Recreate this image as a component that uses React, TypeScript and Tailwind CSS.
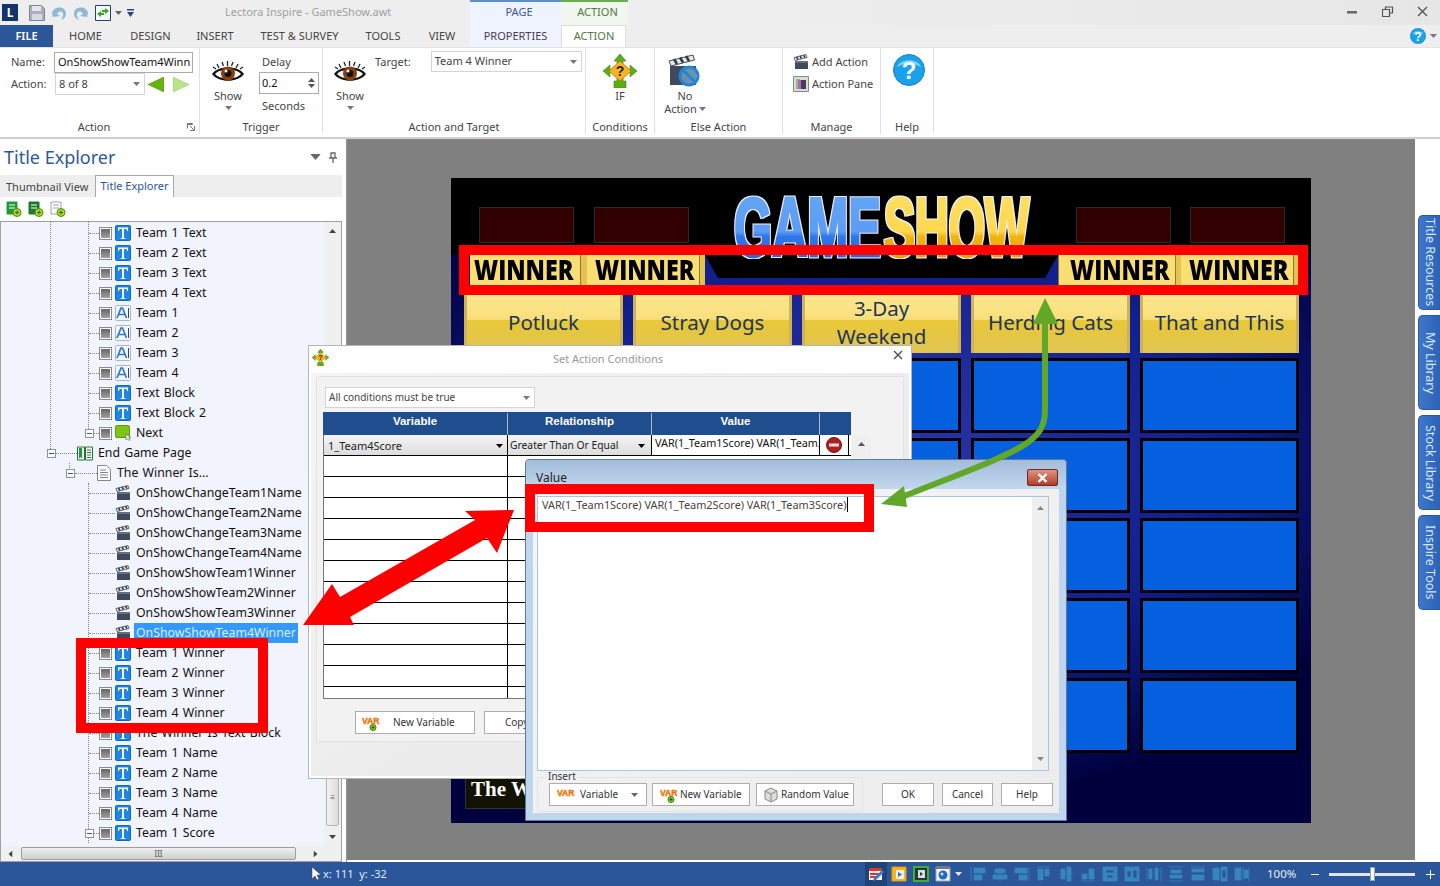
const Caret = ({ className = "" }: { className?: string }) => (
  <svg width="7" height="4" viewBox="0 0 7 4" className={className}>
    <path d="M0 0h7L3.500 4z" fill="currentColor" />
  </svg>
);

const Eye = () => (
  <svg width="34" height="24" viewBox="0 0 34 24">
    <path d="M2 7 5 9M6 4l2 4M11 2l1.500 4M16.500 1v5M22 2l-1.500 4M27 4l-2 4M32 7l-3 2" stroke="#222" strokeWidth="1.300" />
    <path d="M1 14C7 5 27 5 33 14 27 23 7 23 1 14z" fill="#111" />
    <path d="M4 14C9 8 25 8 30 14 25 20 9 20 4 14z" fill="#fff" />
    <circle cx="17" cy="13.500" r="7" fill="#8a3f10" />
    <circle cx="17" cy="13.500" r="3.500" fill="#111" />
    <circle cx="15" cy="11" r="1.500" fill="#fff" />
  </svg>
);

const Clapper = ({ size = 16 }: { size?: number }) => (
  <svg width={size} height={size} viewBox="0 0 16 16">
    <path d="M2 7h13v8H2z" fill="#3f4b5c" />
    <path d="M1 3.500 13 .5l1 3L2 6.500z" fill="#e8e8e8" stroke="#3f4b5c" strokeWidth=".8" />
    <path d="M3.500 3l1.500 2.500M7 2l1.500 2.500M10.500 1.200 12 3.700" stroke="#2f3845" strokeWidth="1.500" />
    <path d="M2 7h13v2H2z" fill="#66717f" />
  </svg>
);

const TIcon = () => (
  <svg width="16" height="16" viewBox="0 0 16 16">
    <rect x=".5" y=".5" width="15" height="15" rx="1" fill="#1c86e8" stroke="#1468b8" />
    <path d="M3 2.500h10V6h-1l-.5-2H9v9l1.500.5v.5h-5v-.5L7 13V4H4.500L4 6H3z" fill="#fff" />
  </svg>
);

const AIcon = () => (
  <svg width="16" height="16" viewBox="0 0 16 16">
    <rect x=".5" y=".5" width="15" height="15" rx="1" fill="#f4f6fd" stroke="#a8b4c4" />
    <path d="M2 13 6 3h1.500l4 10M3.800 9.500h6" fill="none" stroke="#2b78d0" strokeWidth="1.700" />
    <path d="M13.500 3v10" stroke="#444" strokeWidth="1" />
  </svg>
);

const GrayBox = () => (
  <span className="flex h-[13px] w-[13px] shrink-0 items-center justify-center border border-[#8a8a8a] bg-white">
    <span className="h-[9px] w-[9px] bg-gradient-to-b from-[#666] to-[#a0a0a0]" />
  </span>
);

const Toggle = ({ plus }: { plus?: boolean }) => (
  <svg width="9" height="9" viewBox="0 0 9 9" className="shrink-0">
    <rect x=".5" y=".5" width="8" height="8" fill="#fff" stroke="#8a93a5" />
    <path d={plus ? "M2 4.500h5M4.500 2v5" : "M2 4.500h5"} stroke="#2b579a" />
  </svg>
);

const Dots = ({ w }: { w: number }) => (
  <span className="h-0 shrink-0 border-t border-dotted border-[#808080]" style={{ width: w }} />
);

const Book = () => (
  <svg width="16" height="15" viewBox="0 0 16 15" className="shrink-0">
    <path d="M.5 1h7v13h-7zM8.500 1h7v13h-7z" fill="#fff" stroke="#1c7a2e" />
    <path d="M2 2h3v11l-1.500-2L2 13z" fill="#1f9a3a" />
    <path d="M10 4h4M10 6.500h4M10 9h4M10 11.500h4" stroke="#1c7a2e" />
  </svg>
);

const PageIcon = () => (
  <svg width="14" height="16" viewBox="0 0 14 16" className="shrink-0">
    <path d="M.5.5h9l4 4v11H.5z" fill="#fff" stroke="#7d8794" />
    <path d="M3 5h6M3 7.500h8M3 10h8M3 12.500h8" stroke="#7d8794" />
  </svg>
);

const NextIcon = () => (
  <svg width="16" height="16" viewBox="0 0 16 16" className="shrink-0">
    <rect x=".5" y=".5" width="14" height="12" rx="1.500" fill="#7ec614" stroke="#5c9a10" />
    <path d="M11 9l0 6 1.500-1.500 1.500 2 1-.7-1.300-2H16z" fill="#fff" stroke="#555" strokeWidth=".6" />
  </svg>
);

type Row = { kind: "t" | "a" | "clap" | "next" | "book" | "page"; label: string; selected?: boolean };

const rows: Row[] = [
  { kind: "t", label: "Team 1 Text" },
  { kind: "t", label: "Team 2 Text" },
  { kind: "t", label: "Team 3 Text" },
  { kind: "t", label: "Team 4 Text" },
  { kind: "a", label: "Team 1" },
  { kind: "a", label: "Team 2" },
  { kind: "a", label: "Team 3" },
  { kind: "a", label: "Team 4" },
  { kind: "t", label: "Text Block" },
  { kind: "t", label: "Text Block 2" },
  { kind: "next", label: "Next" },
  { kind: "book", label: "End Game Page" },
  { kind: "page", label: "The Winner Is..." },
  { kind: "clap", label: "OnShowChangeTeam1Name" },
  { kind: "clap", label: "OnShowChangeTeam2Name" },
  { kind: "clap", label: "OnShowChangeTeam3Name" },
  { kind: "clap", label: "OnShowChangeTeam4Name" },
  { kind: "clap", label: "OnShowShowTeam1Winner" },
  { kind: "clap", label: "OnShowShowTeam2Winner" },
  { kind: "clap", label: "OnShowShowTeam3Winner" },
  { kind: "clap", label: "OnShowShowTeam4Winner", selected: true },
  { kind: "t", label: "Team 1 Winner" },
  { kind: "t", label: "Team 2 Winner" },
  { kind: "t", label: "Team 3 Winner" },
  { kind: "t", label: "Team 4 Winner" },
  { kind: "t", label: "The Winner Is Text Block" },
  { kind: "t", label: "Team 1 Name" },
  { kind: "t", label: "Team 2 Name" },
  { kind: "t", label: "Team 3 Name" },
  { kind: "t", label: "Team 4 Name" },
  { kind: "t", label: "Team 1 Score" },
];

const TreeRow = ({ row, index }: { row: Row; index: number }) => {
  const text = <span className="ml-[5px] whitespace-nowrap">{row.label}</span>;
  if (row.kind === "book")
    return (
      <div className="flex h-5 items-center pl-[46px]">
        <Toggle />
        <Dots w={21} />
        <Book />
        <span className="ml-[5px] whitespace-nowrap">{row.label}</span>
      </div>
    );
  if (row.kind === "page")
    return (
      <div className="flex h-5 items-center pl-[65px]">
        <Toggle />
        <Dots w={22} />
        <PageIcon />
        <span className="ml-[6px] whitespace-nowrap">{row.label}</span>
      </div>
    );
  if (row.kind === "clap")
    return (
      <div className="flex h-5 items-center pl-[88px]">
        <Dots w={26} />
        <Clapper />
        <span className={`ml-[3px] whitespace-nowrap px-[2px] py-px ${row.selected ? "bg-[#3399ff] text-[#dbeeff]" : ""}`}>{row.label}</span>
      </div>
    );
  return (
    <div className={`flex h-5 items-center ${row.kind === "next" || index === 30 ? "pl-[84px]" : "pl-[88px]"}`}>
      {row.kind === "next" || index === 30 ? <Toggle /> : null}
      <Dots w={row.kind === "next" || index === 30 ? 5 : 10} />
      <GrayBox />
      <span className="ml-[3px] shrink-0">{row.kind === "a" ? <AIcon /> : row.kind === "next" ? <NextIcon /> : <TIcon />}</span>
      {text}
    </div>
  );
};

const VarIcon = ({ plus }: { plus?: boolean }) => (
  <svg width="18" height="16" viewBox="0 0 18 16" className="shrink-0">
    <text x="0" y="9" fontSize="8.500" fontWeight="700" fontFamily="Liberation Sans" fill="#ec5f10" stroke="#ef8a14" strokeWidth=".5">
      VAR
    </text>
    {plus ? (
      <>
        <circle cx="11" cy="12.500" r="3" fill="#8ed020" stroke="#3a7a10" />
        <path d="M9.500 12.500h3M11 11v3" stroke="#245a08" />
      </>
    ) : null}
  </svg>
);

const IfIcon = ({ size = 34 }: { size?: number }) => (
  <svg width={size} height={size} viewBox="0 0 34 34">
    <path d="M17 0l6 7h-3v20h3v7H11v-7h3V7h-3zM0 17l7-6v12zM34 17l-7-6v12z" fill="#5cae14" stroke="#3f7f0c" strokeWidth=".6" />
    <path d="M17 7l11 10-11 10L6 17z" fill="#fbb324" stroke="#c97f00" />
    <text x="17" y="22" textAnchor="middle" fontSize="14" fontWeight="700" fontFamily="Liberation Sans" fill="#222">?</text>
  </svg>
);

const HelpCircle = ({ size = 32 }: { size?: number }) => (
  <svg width={size} height={size} viewBox="0 0 32 32">
    <circle cx="16" cy="16" r="15.500" fill="#19a2ec" stroke="#1680c8" />
    <path d="M4 13C7 4 25 4 28 13 22 9 10 9 4 13z" fill="#7fd3fa" />
    <text x="16" y="25" textAnchor="middle" fontSize="24" fontWeight="700" fontFamily="Liberation Sans" fill="#fff">?</text>
  </svg>
);

const RibbonGroup = ({ w, label, children, labelClass = "" }: { w: number; label: string; children: React.ReactNode; labelClass?: string }) => (
  <div className="relative flex h-[86px] shrink-0 flex-col border-r border-[#e1e1e1]" style={{ width: w }}>
    <div className="flex min-h-0 flex-1">{children}</div>
    <div className={`h-[14px] text-center text-[11px] leading-[14px] text-[#444] ${labelClass}`}>{label}</div>
  </div>
);

const Select = ({ className, value, textClass = "text-[11px]" }: { className: string; value: string; textClass?: string }) => (
  <div className={`flex items-center justify-between border border-[#d4d4d4] bg-white px-[3px] text-[#444] ${className}`}>
    <span className={`whitespace-nowrap ${textClass}`}>{value}</span>
    <Caret className="mr-[1px] text-[#777]" />
  </div>
);

const AlignIcon = ({ kind }: { kind: number }) => {
  const shapes: string[] = [
    "M1 1v14M4 2h11v5H4zM4 9h8v5H4z",
    "M8 1v14M3 3h10v4H3zM1 9h14v4H1z",
    "M15 1v14M1 2h12v5H1zM5 9h8v5H5z",
    "M1 1h14M2 3h5v11H2zM9 3h4v7H9z",
    "M1 8h14M3 3h4v10H3zM9 1h4v14H9z",
    "M1 15h14M2 8h5v5H2zM9 3h5v10H9z",
    "M1 1h14v14H1zM4 4h8v3H4zM5 9h6v3H5z",
    "M1 1h14v14H1zM3 5h4v6H3zM9 4h4v8H9z",
    "M1 1v14M15 1v14M3 3h3v10H3zM9 2h3v12H9z",
    "M1 1h14M1 15h14M3 4h10v3H3zM2 9h12v3H2z",
    "M1 1h14M2 3h12v3H2zM2 9h12v5H2z",
    "M1 2h6v12H1zM9 1v14h6V1zM10 4h4v8h-4z",
    "M1 2h6v12H1zM9 1v14M15 1v14M10 4h4v8h-4z",
  ];
  return (
    <svg width="16" height="16" viewBox="0 0 16 16" className="shrink-0">
      <path d={shapes[kind]} fill="#3586bd" stroke="#3a84bb" strokeWidth=".8" fillRule="evenodd" />
    </svg>
  );
};

const DialogButton = ({ className = "", children }: { className?: string; children: React.ReactNode }) => (
  <div className={`flex h-[23px] shrink-0 items-center border border-[#adadad] bg-white text-[10px] text-[#333] ${className}`}>{children}</div>
);

const ConditionsDialog = () => (
  <div className="absolute left-[308px] top-[345px] z-10 flex h-[434px] w-[604px] flex-col border border-[#b5b5b5] bg-white">
    <div className="relative flex h-[27px] shrink-0 items-center justify-center pr-[4px] text-[11px] text-[#999]">
      <span className="absolute left-[3px] top-[3px]"><IfIcon size={17} /></span>
      <span>Set Action Conditions</span>
      <span className="absolute right-[8px] top-[4px] text-[#444]">
        <svg width="10" height="10" viewBox="0 0 10 10"><path d="M1 1l8 8M9 1l-8 8" stroke="currentColor" strokeWidth="1.200" /></svg>
      </span>
    </div>
    <div className="mx-[2px] mb-[2px] flex-1 bg-gradient-to-br from-[#f4f4f4] to-[#e6e6e6] px-[5px] pt-[3px]">
      <div className="h-[366px] rounded-[3px] border border-[#e2e2e2] bg-[#f2f2f2] pl-[9px] pt-[10px]">
        <Select className="-ml-[1px] h-[21px] w-[210px]" textClass="text-[10px]" value="All conditions must be true" />
        <div className="relative -ml-[3px] mt-[4px] w-[528px]">
          <div className="flex h-[23px] border-t border-[#1f4e8f] bg-[#1f4e8f] text-center font-['Liberation_Sans',sans-serif] text-[11.500px] font-bold text-white">
            <div className="w-[185px] border-r border-[#a9bcd4] leading-[16px]">Variable</div>
            <div className="w-[144px] border-r border-[#a9bcd4] leading-[16px]">Relationship</div>
            <div className="w-[168px] border-r border-[#a9bcd4] leading-[16px]">Value</div>
            <div className="flex-1" />
          </div>
          <div className="border-b border-l border-[#777] bg-white">
            <div className="flex h-[21px] border-b border-black text-[11px] text-[#222]">
              <div className="flex w-[184px] items-center justify-between border-r border-black bg-gradient-to-b from-[#f5f5f5] to-[#dcdcdc] px-[4px] pt-[2px]">
                <span>1_Team4Score</span>
                <Caret className="text-black" />
              </div>
              <div className="flex w-[144px] items-center justify-between border-r border-black bg-gradient-to-b from-[#f5f5f5] to-[#dcdcdc] px-[2px] pr-[6px] pt-[2px] text-[10.300px]">
                <span className="whitespace-nowrap">Greater Than Or Equal</span>
                <Caret className="text-black" />
              </div>
              <div className="w-[168px] overflow-hidden whitespace-nowrap border-r border-black pl-[3px] text-[10.800px] text-[#111]">VAR(1_Team1Score) VAR(1_Team2Score)</div>
              <div className="flex w-[29px] items-center justify-center border-r border-black">
                <svg width="16" height="16" viewBox="0 0 16 16">
                  <circle cx="8" cy="8" r="7.500" fill="#b51c1c" stroke="#7a0f0f" />
                  <rect x="3" y="6.500" width="10" height="3" fill="#f3e4e4" />
                </svg>
              </div>
            </div>
            {Array.from({ length: 11 }).map((_, i) => (
              <div key={i} className="h-[21px] border-b border-black">
                <div className="h-full w-[184px] border-r border-black" />
              </div>
            ))}
            <div className="h-[11px] w-[184px] border-r border-black" />
          </div>
          <div className="absolute left-[529px] top-[23px] flex h-[22px] w-[19px] justify-center bg-[#efefef] pt-[7px] text-[#555]">
            <Caret className="rotate-180" />
          </div>
        </div>
        <div className="mt-[12px] flex gap-[9px] pl-[29px]">
          <DialogButton className="w-[120px] pl-[6px]">
            <VarIcon plus />
            <span className="ml-[13px]">New Variable</span>
          </DialogButton>
          <DialogButton className="w-[120px] pl-[20px]">Copy</DialogButton>
        </div>
      </div>
    </div>
  </div>
);

const ValueDialog = () => (
  <div className="absolute left-[525px] top-[459px] z-20 flex h-[362px] w-[542px] flex-col rounded-t-[4px] border border-[#5a7a98] bg-[#bed5ed] px-[7px] pb-[7px]">
    <div className="relative flex h-[29px] shrink-0 items-center pl-[3px] pt-[6px] text-[12px] text-[#222]">
      <div className="absolute inset-x-[-7px] top-0 h-[29px] rounded-t-[4px] bg-gradient-to-b from-[#a3bcd9] to-[#c1d7ee]" />
      <span className="relative">Value</span>
      <span className="absolute right-[1px] top-[9px] flex h-[17px] w-[31px] items-center justify-center rounded-[2px] border border-[#6b2a22] bg-gradient-to-b from-[#dc9181] via-[#c96a58] to-[#b23a28]">
        <svg width="11" height="10" viewBox="0 0 11 10"><path d="M1.500 1l8 8M9.500 1l-8 8" stroke="#fff" strokeWidth="2.400" /></svg>
      </span>
    </div>
    <div className="flex flex-1 flex-col bg-gradient-to-br from-[#f5f5f5] to-[#ececec] px-[4px] pt-[7px]">
      <div className="relative h-[275px] w-[512px] border border-[#a8c6e0] bg-white">
        <div className="pl-[4px] text-[10.900px] leading-[16px] text-[#444]">
          <span>VAR(1_Team1Score) VAR(1_Team2Score) VAR(1_Team3Score)</span>
          <span className="ml-[1px] border-r border-black" />
        </div>
        <div className="absolute bottom-0 right-0 top-0 flex w-[16px] flex-col items-center justify-between bg-[#efefef] py-[9px] text-[#888]">
          <Caret className="rotate-180" />
          <Caret />
        </div>
      </div>
      <div className="flex items-end">
        <div className="relative mt-[6px] flex h-[35px] w-[326px] items-end rounded-[3px] border border-[#e4e4e4] pb-[5px] pl-[11px] pr-[4px]">
          <span className="absolute -top-[7px] left-[9px] bg-[#f1f1f1] px-[1px] text-[10px] leading-[11px] text-[#333]">Insert</span>
          <div className="flex gap-[5px]">
            <DialogButton className="w-[98px] pl-[7px]">
              <VarIcon />
              <span className="ml-[5px]">Variable</span>
              <Caret className="ml-[13px] text-[#666]" />
            </DialogButton>
            <DialogButton className="w-[98px] pl-[7px]">
              <VarIcon plus />
              <span className="ml-[2px] whitespace-nowrap">New Variable</span>
            </DialogButton>
            <DialogButton className="ml-[1px] w-[98px] pl-[6px]">
              <svg width="16" height="16" viewBox="0 0 16 16" className="shrink-0">
                <path d="M8 1l6 3v8l-6 3-6-3V4z" fill="#ddd" stroke="#888" />
                <path d="M2 4l6 3 6-3M8 7v8" fill="none" stroke="#888" />
              </svg>
              <span className="ml-[2px] whitespace-nowrap">Random Value</span>
            </DialogButton>
          </div>
        </div>
        <div className="mb-[6px] ml-[19px] flex gap-[8px]">
          <DialogButton className="w-[52px] justify-center">OK</DialogButton>
          <DialogButton className="w-[51px] justify-center">Cancel</DialogButton>
          <DialogButton className="w-[52px] justify-center">Help</DialogButton>
        </div>
      </div>
    </div>
  </div>
);

const categories = ["Potluck", "Stray Dogs", "3-Day Weekend", "Herding Cats", "That and This"];

const Winner = () => <span className="-mr-[24px] inline-block origin-left scale-x-[.83] whitespace-nowrap">WINNER</span>;

const Slide = () => (
  <div className="flex h-[645px] w-[860px] flex-col bg-[radial-gradient(ellipse_62%_56%_at_50%_42%,#2c35a8_0%,#12208e_60%,#00003c_100%)]">
    <div className="relative flex h-[77px] shrink-0 bg-black pl-[28px] pt-[29px]">
      <div className="h-[36px] w-[95px] border border-[#2a2a2a] bg-[#330000]" />
      <div className="ml-[20px] h-[36px] w-[95px] border border-[#2a2a2a] bg-[#330000]" />
      <svg width="300" height="64" viewBox="0 0 300 64" className="absolute left-[281px] top-[17px] z-[1]">
        <defs>
          <linearGradient id="gameFill" x1="0" y1="0" x2="0" y2="1">
            <stop offset="0" stopColor="#69a8f4" />
            <stop offset=".55" stopColor="#5b9cf5" />
            <stop offset=".6" stopColor="#2e78ea" />
            <stop offset="1" stopColor="#1f5fd0" />
          </linearGradient>
          <linearGradient id="showFill" x1="0" y1="0" x2="0" y2="1">
            <stop offset="0" stopColor="#ffe166" />
            <stop offset=".55" stopColor="#ffd84e" />
            <stop offset=".6" stopColor="#f3b40a" />
            <stop offset="1" stopColor="#d79a05" />
          </linearGradient>
          <filter id="logoEdge" x="-5%" y="-5%" width="110%" height="110%">
            <feMorphology in="SourceAlpha" operator="dilate" radius="1" result="fat" />
            <feFlood floodColor="#e6eefb" />
            <feComposite in2="fat" operator="in" />
            <feMerge>
              <feMergeNode />
              <feMergeNode in="SourceGraphic" />
            </feMerge>
          </filter>
        </defs>
        <g filter="url(#logoEdge)">
          <text x="2" y="61" fontSize="84" fontWeight="700" fontFamily="Liberation Sans" fill="url(#gameFill)" stroke="url(#gameFill)" strokeWidth="3" textLength="147" lengthAdjust="spacingAndGlyphs">GAME</text>
          <text x="152" y="61" fontSize="84" fontWeight="700" fontFamily="Liberation Sans" fill="url(#showFill)" stroke="url(#showFill)" strokeWidth="3" textLength="145" lengthAdjust="spacingAndGlyphs">SHOW</text>
        </g>
      </svg>
      <div className="ml-[387px] h-[36px] w-[95px] border border-[#2a2a2a] bg-[#330000]" />
      <div className="ml-[19px] h-[36px] w-[95px] border border-[#2a2a2a] bg-[#330000]" />
    </div>

    <div className="flex h-[30px] shrink-0 pl-[19px] font-['Open_Sans',sans-serif] text-[28px] font-extrabold leading-[28px] text-black">
      <div className="w-[111px] border-r border-[#8a7a3a] bg-[#f9de74] pl-[4px]"><Winner /></div>
      <div className="w-[6px] bg-[#e3c34f]" />
      <div className="w-[113px] border-r border-[#8a7a3a] bg-[#f9de74] pl-[8px]"><Winner /></div>
      <div className="w-[5px] bg-[#e3c34f]" />
      <svg width="353" height="30" viewBox="0 0 353 30" className="shrink-0">
        <path d="M0 0h353v30H0z" fill="#12208e" />
        <path d="M0 0h353l-13 23H13z" fill="#000" />
      </svg>
      <div className="w-[118px] border-x border-[#8a7a3a] bg-[#f9de74] pl-[11px]"><Winner /></div>
      <div className="w-[5px] bg-[#e3c34f]" />
      <div className="w-[113px] border-r border-[#8a7a3a] bg-[#f9de74] pl-[8px]"><Winner /></div>
      <div className="w-[4px] bg-[#e3c34f]" />
    </div>

    <div className="mt-[10px] grid grid-cols-[repeat(5,159px)] gap-x-[10px] pl-[13px]">
      {categories.map((c) => (
        <div
          key={c}
          className="flex h-[58px] items-center justify-center border-x-[3px] border-[#cdb25a] bg-[linear-gradient(#fce78f_0%,#f9df7b_42%,#e9c838_44%,#e0c453_100%)] px-[8px] pb-[4px] text-center text-[20.500px] leading-[28px] text-[#1b3558]"
        >
          {c}
        </div>
      ))}
    </div>

    <div className="mt-[5px] grid grid-cols-[repeat(5,159px)] grid-rows-[repeat(5,75px)] gap-x-[10px] gap-y-[5px] pl-[13px]">
      {Array.from({ length: 25 }).map((_, i) => (
        <div key={i} className="border-[3px] border-black bg-[#0560e0]" />
      ))}
    </div>

    <div className="ml-[14px] mt-[17px] h-[39px] w-[220px] border border-[#333] bg-[#121200] pl-[5px] font-['Liberation_Serif',serif] text-[21px] font-bold leading-[36px] text-white">
      The Winner Is
    </div>
  </div>
);

export default function App() {
  return (
    <div className="relative flex h-[886px] w-[1440px] flex-col overflow-hidden bg-white font-['Noto_Sans','Open_Sans',sans-serif] text-[#222]">
      {/* title bar */}
      <div className="relative flex h-[25px] shrink-0 items-center bg-gradient-to-r from-[#eeeeee] via-[#eeeeee] to-[#e6e6e6] pl-[2px]">
        <div className="flex h-[17px] w-[16px] items-center justify-center bg-[#12336c] text-[12px] font-bold text-white">L</div>
        <svg width="16" height="16" viewBox="0 0 16 16" className="ml-[11px]">
          <path d="M.5.5h12l3 3v12H.5z" fill="#a9b0bb" stroke="#7d8591" />
          <path d="M3 1h9v5H3z" fill="#e6e8eb" />
          <path d="M3 9h10v6H3z" fill="#d6d9de" />
        </svg>
        <svg width="16" height="16" viewBox="0 0 16 16" className="ml-[6px]">
          <path d="M1 8C2 1 15 0 15 9c0 3-2 5-5 6 2-3 3-6 1-8-2-1-4 0-5 2l3 2-7 1z" fill="#8db8d6" />
        </svg>
        <svg width="16" height="16" viewBox="0 0 16 16" className="ml-[6px] -scale-x-100">
          <path d="M1 8C2 1 15 0 15 9c0 3-2 5-5 6 2-3 3-6 1-8-2-1-4 0-5 2l3 2-7 1z" fill="#8db8d6" />
        </svg>
        <svg width="16" height="16" viewBox="0 0 16 16" className="ml-[6px]">
          <path d="M.5.5h15v15H.5z" fill="#f4f7fb" stroke="#24406e" />
          <path d="M2 9l4-3v2h3v2H6v2zM14 6l-4-3v2H7v2h3v2z" fill="#3aa22a" />
        </svg>
        <Caret className="ml-[4px] text-[#666]" />
        <svg width="7" height="8" viewBox="0 0 7 8" className="ml-[5px]">
          <path d="M0 0h7v1.500H0zM0 3h7L3.500 8z" fill="#26457a" />
        </svg>
        <span className="absolute left-[225px] top-[4px] text-[11px] leading-[15px] text-[#a0a0a0]">Lectora Inspire - GameShow.awt</span>
        <div className="absolute left-[470px] top-0 h-[25px] w-[91px] border-t-2 border-[#5b90d0] bg-[#eff3fd] pl-[7px] text-center text-[11px] leading-[19px] text-[#3c5a8c]">PAGE</div>
        <div className="absolute left-[561px] top-0 h-[25px] w-[67px] border-t-2 border-[#68b04e] bg-[#f1f6ee] pl-[6px] text-center text-[11px] leading-[19px] text-[#4f7a3e]">ACTION</div>
        <svg width="12" height="3" viewBox="0 0 12 3" className="absolute left-[1346px] top-[11px]"><path d="M1 0h10v2.500H1z" fill="#666" /></svg>
        <svg width="12" height="12" viewBox="0 0 12 12" className="absolute left-[1382px] top-[6px]"><path d="M3.500 3V1h7v6H8M.5 3.500h7v7h-7z" fill="none" stroke="#555" strokeWidth="1.200" /></svg>
        <svg width="11" height="11" viewBox="0 0 11 11" className="absolute left-[1417px] top-[6px]"><path d="M1 1l9 9M10 1l-9 9" stroke="#555" strokeWidth="1.400" /></svg>
      </div>

      {/* ribbon tabs */}
      <div className="relative flex h-[22px] shrink-0 bg-[#eeeeee] text-center text-[11px] leading-[22px] text-[#444]">
        <div className="w-[53px] bg-[#2b579a] font-semibold text-white">FILE</div>
        <div className="w-[65px]">HOME</div>
        <div className="w-[65px]">DESIGN</div>
        <div className="w-[64px]">INSERT</div>
        <div className="w-[105px]">TEST &amp; SURVEY</div>
        <div className="w-[62px]">TOOLS</div>
        <div className="w-[56px]">VIEW</div>
        <div className="w-[91px] bg-[#eff3fd] text-[#4a3a5a]">PROPERTIES</div>
        <div className="w-[65px] border-x border-t border-[#dcdcdc] bg-white pl-[1px] leading-[20px] text-[#4f7a3e]">ACTION</div>
        <span className="absolute left-[1410px] top-[3px]"><HelpCircle size={16} /></span>
        <Caret className="absolute left-[1430px] top-[9px] text-[#777]" />
      </div>

      {/* ribbon */}
      <div className="flex h-[92px] shrink-0 border-b-2 border-t border-[#d0d0d0] border-t-[#e4e4e4] bg-white pl-[1px]">
        <RibbonGroup w={199} label="Action" labelClass="pr-[12px]">
          <div className="relative flex-1 pl-[10px] pt-[3px] text-[11px] text-[#444]">
            <div className="flex h-[22px] items-center">
              <span className="w-[43px]">Name:</span>
              <div className="flex h-[21px] w-[139px] items-center overflow-hidden whitespace-nowrap border border-[#ababab] pl-[3px] text-[11px] text-[#111]">OnShowShowTeam4Winn</div>
            </div>
            <div className="flex h-[22px] items-center">
              <span className="w-[44px]">Action:</span>
              <Select className="h-[22px] w-[90px]" value="8 of 8" />
              <svg width="16" height="15" viewBox="0 0 16 15" className="ml-[3px]"><path d="M0 7.500L16 0v15z" fill="#65b512" stroke="#4d8f0c" strokeWidth=".6" /></svg>
              <svg width="16" height="15" viewBox="0 0 16 15" className="ml-[9px]"><path d="M16 7.500L0 0v15z" fill="#b9e488" stroke="#9ccb68" strokeWidth=".6" /></svg>
            </div>
            <svg width="8" height="8" viewBox="0 0 8 8" className="absolute right-[4px] top-[75px]"><path d="M.5.5h5v1h-5zM.5.5v5M7.500 3v4.500H3M3 3l4 4" fill="none" stroke="#777" /></svg>
          </div>
        </RibbonGroup>
        <RibbonGroup w={123} label="Trigger">
          <div className="flex w-[56px] flex-col items-center pt-[12px] text-[11px] text-[#444]">
            <Eye />
            <span className="mt-[5px] leading-[14px]">Show</span>
            <Caret className="mt-[3px] text-[#777]" />
          </div>
          <div className="pl-[3px] pt-[4px] text-[11px] text-[#444]">
            <div className="h-[20px] pl-[3px] leading-[20px]">Delay</div>
            <div className="flex h-[22px] w-[60px] items-center justify-between border border-[#ababab] pl-[2px] pr-[3px] text-[#111]">
              <span>0.2</span>
              <span className="flex flex-col gap-[2px] text-[#555]"><Caret className="rotate-180" /><Caret /></span>
            </div>
            <div className="mt-[4px] pl-[3px] leading-[16px]">Seconds</div>
          </div>
        </RibbonGroup>
        <RibbonGroup w={263} label="Action and Target">
          <div className="flex w-[52px] flex-col items-center pl-[2px] pt-[12px] text-[11px] text-[#444]">
            <Eye />
            <span className="mt-[5px] leading-[14px]">Show</span>
            <Caret className="mt-[3px] text-[#777]" />
          </div>
          <div className="pt-[4px] text-[11px] leading-[20px] text-[#444]">Target:</div>
          <Select className="ml-[20px] mt-[3px] h-[21px] w-[151px]" value="Team 4 Winner" />
        </RibbonGroup>
        <RibbonGroup w={69} label="Conditions">
          <div className="flex w-full flex-col items-center pt-[6px] text-[11px] text-[#444]">
            <IfIcon />
            <span className="mt-[1px] leading-[14px]">IF</span>
          </div>
        </RibbonGroup>
        <RibbonGroup w={128} label="Else Action">
          <div className="flex w-[60px] flex-col items-center pt-[6px] text-center text-[11px] leading-[13px] text-[#444]">
            <svg width="34" height="34" viewBox="0 0 34 34">
              <path d="M2 12h26v19H2z" fill="#3f4b5c" />
              <path d="M1 7l24-6 1.500 5L3 12z" fill="#e8e8e8" stroke="#3f4b5c" />
              <path d="M6 5l3 5M12 3.500l3 5M18 2l3 5" stroke="#2f3845" strokeWidth="2.500" />
              <circle cx="21" cy="22" r="9" fill="#9fc8e8" fillOpacity=".55" stroke="#1c87d8" strokeWidth="3" />
              <path d="M15 16l12 12" stroke="#1c87d8" strokeWidth="3" />
            </svg>
            <span className="mt-[1px]">No</span>
            <span className="flex items-center gap-[2px]">Action <Caret className="text-[#777]" /></span>
          </div>
        </RibbonGroup>
        <RibbonGroup w={98} label="Manage">
          <div className="flex flex-col gap-[6px] pl-[10px] pt-[6px] text-[11px] text-[#444]">
            <div className="flex h-[16px] items-center gap-[3px]"><Clapper /><span className="whitespace-nowrap">Add Action</span></div>
            <div className="flex h-[16px] items-center gap-[3px]">
              <svg width="16" height="16" viewBox="0 0 16 16">
                <path d="M.5.5h15v15H.5z" fill="#dcdcdc" stroke="#888" />
                <path d="M3 3h4v10H3z" fill="#8fc45a" /><path d="M5 4h3v9H5z" fill="#b060e0" /><path d="M8 4h5v9H8z" fill="#444" />
              </svg>
              <span className="whitespace-nowrap">Action Pane</span>
            </div>
          </div>
        </RibbonGroup>
        <RibbonGroup w={53} label="Help">
          <div className="flex w-full justify-center pl-[3px] pt-[6px]"><HelpCircle /></div>
        </RibbonGroup>
      </div>

      {/* main */}
      <div className="flex min-h-0 flex-1">
        <div className="flex w-[347px] shrink-0 flex-col border-r border-[#8e8e8e] bg-white pr-[4px]">
          <div className="flex h-[36px] shrink-0 items-center justify-between pl-[4px] pr-[5px]">
            <span className="text-[18px] leading-[26px] text-[#2b5a96]">Title Explorer</span>
            <span className="flex items-center gap-[10px] text-[#666]">
              <Caret className="scale-150" />
              <svg width="8" height="11" viewBox="0 0 8 11"><path d="M2 1h4v5H2zM0 6h8M4 6v5" fill="none" stroke="#666" strokeWidth="1.300" /></svg>
            </span>
          </div>
          <div className="flex h-[22px] shrink-0 items-end bg-[#eeeeee] text-[11px] leading-[20px] text-[#444]">
            <div className="w-[95px] pl-[6px]">Thumbnail View</div>
            <div className="h-[22px] w-[79px] border-x border-t border-[#a8a8a8] bg-white text-center text-[#2b579a]">Title Explorer</div>
          </div>
          <div className="flex h-[24px] shrink-0 items-center gap-[6px] pl-[6px]">
            {["#1f9a3a", "#1c7a2e", "#9aa3af"].map((c) => (
              <svg key={c} width="16" height="16" viewBox="0 0 16 16">
                <path d="M1 1h10v12H1z" fill={c === "#9aa3af" ? "#fff" : c} stroke={c} />
                <path d="M3 4h6M3 7h6" stroke={c === "#9aa3af" ? c : "#fff"} />
                <circle cx="11" cy="11.500" r="4" fill="#a6dc2a" stroke="#4f8a12" />
                <path d="M9 11.500h4M11 9.500v4" stroke="#2c6208" />
              </svg>
            ))}
          </div>
          <div className="relative min-h-0 flex-1 overflow-hidden border border-[#a0a0a0] bg-[#f1f3fd] text-[12.300px] text-[#111] [word-spacing:1px]">
            <span className="absolute left-[49px] top-0 h-[231px] border-l border-dotted border-[#808080]" />
            <span className="absolute left-[68px] top-[241px] h-[11px] border-l border-dotted border-[#808080]" />
            <span className="absolute left-[87px] top-0 h-[213px] border-l border-dotted border-[#808080]" />
            <span className="absolute left-[87px] top-[261px] h-[360px] border-l border-dotted border-[#808080]" />
            <div className="relative pt-[1px]">
              {rows.map((r, i) => (
                <TreeRow key={r.label + i} row={r} index={i} />
              ))}
            </div>
            <div className="absolute bottom-[15px] right-0 top-0 flex w-[17px] flex-col items-center justify-between bg-[#f0f0f0] py-[7px] text-[#444]">
              <Caret className="rotate-180" />
              <div className="mb-[9px] mt-auto flex h-[60px] w-[13px] items-center justify-center rounded-[2px] border border-[#b5b5b5] bg-gradient-to-r from-[#f2f2f2] to-[#dcdcdc] text-[8px] leading-[3px] text-[#666]">≡</div>
              <Caret />
            </div>
            <div className="absolute bottom-0 left-0 right-0 flex h-[15px] items-center bg-[#f0f0f0] text-[#444]">
              <Caret className="ml-[6px] rotate-90" />
              <div className="ml-[7px] flex h-[13px] w-[275px] items-center justify-center rounded-[2px] border border-[#9d9d9d] bg-gradient-to-b from-[#f0f0f0] to-[#cfcfcf] text-[8px] leading-none text-[#555]">III</div>
              <Caret className="ml-[16px] -rotate-90" />
            </div>
          </div>
        </div>
        <div className="flex w-[1068px] shrink-0 flex-col bg-white">
          <div className="h-[721px] border-l border-t border-[#888] bg-[#808080] pl-[103px] pt-[38px]">
            <Slide />
          </div>
        </div>
        <div className="flex w-[25px] shrink-0 flex-col gap-[5px] pl-[3px] pt-[76px]">
          {["Title Resources", "My Library", "Stock Library", "Inspire Tools"].map((t) => (
            <div
              key={t}
              className="flex h-[95px] w-[22px] items-center justify-center rounded-l-[5px] border border-r-0 border-[#2a5aa0] bg-gradient-to-r from-[#3e78cc] to-[#2d62b4] text-[12.500px] text-[#d7e6fa] [writing-mode:vertical-rl]"
            >
              <span className="whitespace-nowrap">{t}</span>
            </div>
          ))}
        </div>
      </div>

      {/* status bar */}
      <div className="flex h-[24px] shrink-0 items-center bg-[#2b579a] text-[11px] text-white">
        <div className="flex w-[865px] shrink-0 items-center pl-[311px]">
          <svg width="10" height="14" viewBox="0 0 10 14"><path d="M1 0v12l3-3 2 4 2-1-2-4h4z" fill="#fff" stroke="#333" strokeWidth=".5" /></svg>
          <span className="ml-[2px] whitespace-nowrap text-[#e0e8f4]">x: 111&nbsp; y: -32</span>
        </div>
        <div className="flex h-[24px] w-[22px] items-center justify-center bg-[#1f4478]">
          <svg width="16" height="16" viewBox="0 0 16 16"><path d="M1 2h13v12H1z" fill="#f4f4f4" /><path d="M1 2h13v3H1zM2 7h9v2H2zM2 10h7v2H2z" fill="#d83a30" /><path d="M14 4l2 2-8 8-3 1 1-3z" fill="#2f7ed8" /></svg>
        </div>
        <span className="ml-[2px] flex w-[19px] justify-center">
          <svg width="16" height="16" viewBox="0 0 16 16"><path d="M1 1h14v14H1z" fill="#f7b51c" stroke="#e89a10" /><path d="M5 4h8v9H5z" fill="#e8eef6" /><path d="M7 6l4 2.500L7 11z" fill="#3a6ea8" /></svg>
        </span>
        <span className="ml-[3px] flex w-[19px] justify-center">
          <svg width="16" height="16" viewBox="0 0 16 16"><path d="M1 1h14v14H1z" fill="#30333a" stroke="#37b52a" strokeWidth="2" /><path d="M5 4h7v8H5z" fill="#d8dde4" /><path d="M7 6l3 2-3 2z" fill="#30333a" /></svg>
        </span>
        <span className="ml-[3px] flex w-[19px] justify-center">
          <svg width="16" height="16" viewBox="0 0 16 16"><path d="M1 1h14v14H1z" fill="#f0f4f8" stroke="#9aa3af" /><path d="M1 1h14v2H1z" fill="#777" /><circle cx="8" cy="9" r="4.500" fill="#1e6fc0" /><circle cx="7" cy="8" r="1.500" fill="#cfe7fb" /></svg>
        </span>
        <Caret className="ml-[3px] text-[#dfe8f5]" />
        <div className="ml-[8px] flex gap-[6px]">
          {Array.from({ length: 13 }).map((_, i) => (
            <AlignIcon key={i} kind={i} />
          ))}
        </div>
        <span className="ml-[17px] text-[11.500px] text-[#e8eef8]">100%</span>
        <span className="ml-[15px] h-px w-[8px] bg-white" />
        <div className="relative ml-[10px] h-[3px] w-[86px] bg-[#dfe6f0]">
          <span className="absolute -top-[6px] left-[41px] h-[14px] w-[5px] border border-[#8aa] bg-white" />
        </div>
        <svg width="9" height="9" viewBox="0 0 9 9" className="ml-[11px]"><path d="M0 4.500h9M4.500 0v9" stroke="#fff" /></svg>
      </div>

      <ConditionsDialog />
      <ValueDialog />

      {/* callouts */}
      <div className="absolute left-[459px] top-[245px] z-30 h-[50px] w-[849px] border-[10px] border-[#ff0000]" />
      <div className="absolute left-[76px] top-[638px] z-30 h-[95px] w-[192px] border-[10px] border-[#ff0000]" />
      <div className="absolute left-[525px] top-[484px] z-30 h-[48px] w-[349px] border-[10px] border-[#ff0000]" />
      <svg width="1440" height="886" viewBox="0 0 1440 886" className="pointer-events-none absolute left-0 top-0 z-40">
        <path d="M303 625 332 584 340 597 475 520 465 511 514 510 497 553 487 538 350 617 354 625z" fill="#ff0000" />
        <path d="M1045 320V410C1045 444 1020 450 902 497" fill="none" stroke="#63a728" strokeWidth="6" />
        <path d="M1045 298 1058 324H1033zM881 504 904 486 907 507z" fill="#63a728" />
      </svg>
    </div>
  );
}
